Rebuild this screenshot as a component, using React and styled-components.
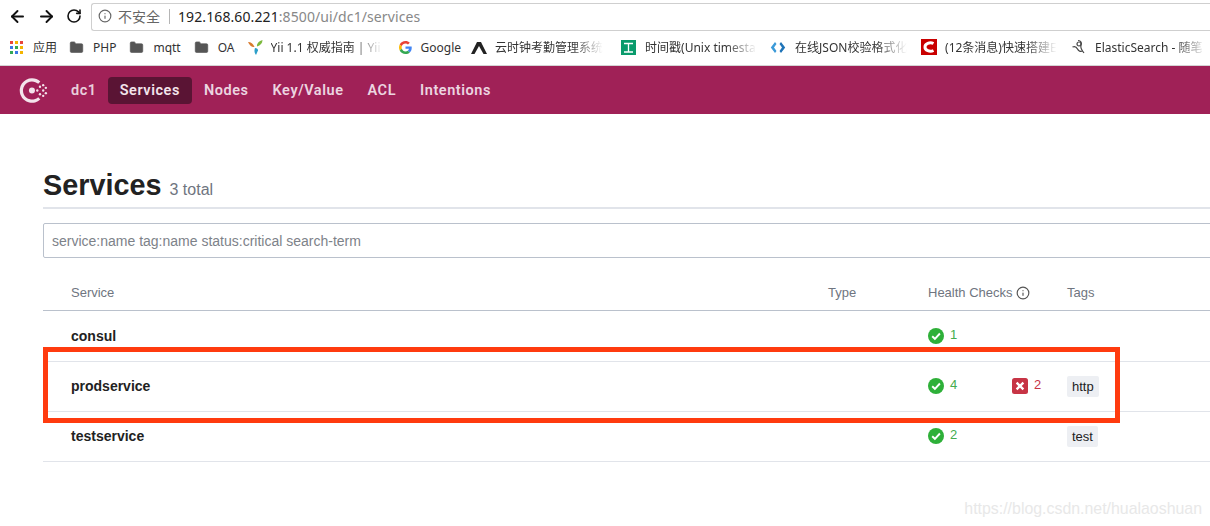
import React from "react";
import styled, { createGlobalStyle } from "styled-components";
import { ArrowLeft, ArrowRight, RotateCw, Info, Folder } from "lucide-react";

const Global = createGlobalStyle`
  html, body {
    margin: 0;
    padding: 0;
    height: 526px;
    overflow: hidden;
    background: #fff;
    font-family: "Liberation Sans", Arial, sans-serif;
  }
  * { box-sizing: border-box; }
`;

const CJK = `"Noto Sans", "Noto Sans CJK SC", sans-serif`;

const Page = styled.div`
  position: relative;
  width: 1210px;
  height: 526px;
  overflow: hidden;
`;

const Toolbar = styled.div`
  display: flex;
  align-items: center;
  height: 32px;
  padding: 0 0 0 8px;
  color: #111;
`;

const NavIcons = styled.div`
  display: flex;
  align-items: center;
  gap: 10px;
  width: 83px;
`;

const Omnibox = styled.div`
  display: flex;
  align-items: center;
  flex: 1;
  height: 28px;
  margin-top: 1px;
  padding: 0 0 1px 6px;
  border: 1px solid #cfcfcf;
  border-right: 0;
  border-radius: 3px 0 0 3px;
  font-family: ${CJK};
  font-size: 14px;
`;

const Insecure = styled.span`
  margin-left: 6px;
  padding-right: 9px;
  border-right: 1px solid #b5b5b5;
  line-height: 15px;
  font-size: 14px;
  color: #666;
`;

const Host = styled.span`
  margin-left: 8px;
  letter-spacing: 0.1px;
  color: #222;
`;

const UrlRest = styled.span`
  letter-spacing: 0.1px;
  color: #888;
`;

const Bookmarks = styled.div`
  display: flex;
  align-items: center;
  height: 34px;
  padding: 0 0 3px 10px;
  border-bottom: 1px solid #d4d4d4;
  font-family: ${CJK};
  font-size: 12px;
  color: #333;
  white-space: nowrap;
  overflow: hidden;
`;

const Mark = styled.div`
  display: flex;
  align-items: center;
  gap: ${(p) => p.$gap || 9}px;
  margin-right: ${(p) => p.$after || 13}px;
  flex: none;
`;

const MarkLabel = styled.span`
  display: block;
  width: ${(p) => p.$width}px;
  mask-image: linear-gradient(to right, #000 72%, transparent 100%);
`;

const TopNav = styled.nav`
  display: flex;
  align-items: center;
  height: 48px;
  padding-left: 17px;
  background: #a02157;
`;

const Logo = styled.svg`
  width: 31px;
  height: 31px;
  margin-right: 23px;
  flex: none;
`;

const DcName = styled.span`
  margin-right: 11px;
  font: 600 14.5px Roboto, sans-serif;
  letter-spacing: 0.55px;
  color: #e9cfdc;
`;

const NavLink = styled.a`
  height: 27px;
  padding: 0 12px;
  border-radius: 4px;
  font: 600 14.5px/27px Roboto, sans-serif;
  letter-spacing: 0.55px;
  color: ${(p) => (p.$active ? "#f3e4eb" : "#ecd5e0")};
  background: ${(p) => (p.$active ? "#5a1434" : "transparent")};
`;

const Main = styled.main`
  padding: 0 0 0 43px;
`;

const TitleBar = styled.div`
  display: flex;
  align-items: baseline;
  gap: 8px;
  height: 95px;
  padding-top: 54px;
  border-bottom: 2px solid #e1e4ea;
  width: 1190px;
`;

const Title = styled.h1`
  margin: 0;
  font-size: 28.8px;
  line-height: 34px;
  font-weight: 700;
  color: #222;
`;

const Count = styled.span`
  font-size: 16px;
  color: #6f7580;
`;

const Search = styled.div`
  width: 1190px;
  height: 35px;
  margin-top: 14px;
  padding-left: 8px;
  border: 1px solid #bac1cc;
  border-radius: 2px;
  font-size: 14px;
  line-height: 35px;
  color: #7d8289;
`;

const Table = styled.div`
  width: 1190px;
  margin-top: 18px;
`;

const Row = styled.div`
  display: grid;
  grid-template-columns: 757px 100px 139px 1fr;
  align-items: center;
  height: ${(p) => (p.$head ? 35 : 50)}px;
  margin-bottom: ${(p) => (p.$head ? 1 : 0)}px;
  padding-left: 28px;
  border-bottom: 1px solid ${(p) => (p.$head ? "#bac1cc" : "#e1e4ea")};
`;

const HeadCell = styled.div`
  display: flex;
  align-items: center;
  gap: 3px;
  padding-bottom: 1px;
  font-size: 13px;
  color: #6f7580;
`;

const Name = styled.div`
  padding-bottom: 1px;
  font-size: 14px;
  font-weight: 700;
  color: #222;
`;

const Health = styled.div`
  display: flex;
  align-items: center;
  margin-top: -1px;
`;

const Check = styled.span`
  display: flex;
  align-items: center;
  gap: 6px;
  width: ${(p) => (p.$wide ? "84px" : "auto")};
  font-size: 13px;
  color: ${(p) => (p.$bad ? "#c73445" : "#43ac4f")};
  span {
    position: relative;
    top: -2px;
  }
`;

const Tag = styled.span`
  display: inline-block;
  padding: 0 5px;
  height: 21px;
  border-radius: 2px;
  background: #edeff3;
  font-size: 13px;
  line-height: 21px;
  color: #222;
`;

const Highlight = styled.div`
  position: absolute;
  left: 43px;
  top: 347px;
  width: 1077px;
  height: 76px;
  border: 5px solid #ff3b0f;
  pointer-events: none;
`;

const Watermark = styled.div`
  position: absolute;
  right: 8px;
  bottom: 8px;
  font-size: 15.9px;
  color: #e8e8e8;
`;

const OkIcon = () => (
  <svg width="16" height="16" viewBox="0 0 16 16">
    <circle cx="8" cy="8" r="8" fill="#2eb039" />
    <path d="M4.2 8.200l2.700 2.600 5-5.300" fill="none" stroke="#fff" strokeWidth="1.900" />
  </svg>
);

const BadIcon = () => (
  <svg width="16" height="16" viewBox="0 0 16 16">
    <rect width="16" height="16" rx="2.5" fill="#c73445" />
    <path d="M4.600 4.600l6.800 6.800M11.400 4.600l-6.800 6.800" stroke="#fff" strokeWidth="2.300" />
  </svg>
);

const AppsIcon = () => (
  <svg width="13" height="13" viewBox="0 0 13 13">
    {["#e8453c", "#f4b400", "#e8453c", "#3b78e7", "#34a853", "#f4b400", "#34a853", "#3b78e7", "#f4b400"].map((c, i) => (
      <rect key={i} x={(i % 3) * 5} y={Math.floor(i / 3) * 5} width="3" height="3" fill={c} />
    ))}
  </svg>
);

const FolderIcon = () => <Folder size={15} fill="#555" color="#555" strokeWidth={1} />;

const YiiIcon = () => (
  <svg width="15" height="15" viewBox="0 0 15 15">
    <path d="M0 2c3 0 5 1.500 6.500 5C4 7.500 1.500 5.500 0 2z" fill="#d8792c" />
    <path d="M14.500 0c0 3-2 5.500-5.500 6.500C8.500 3.500 11 1 14.500 0z" fill="#7cb93e" />
    <path d="M7 8c2 0 3 1 3 2.500L8 15C6.500 13 6 10.500 7 8z" fill="#2c9fc9" />
  </svg>
);

const GoogleIcon = () => (
  <svg width="13" height="13" viewBox="0 0 48 48">
    <path fill="#ea4335" d="M24 9.500c3.500 0 6.700 1.300 9.100 3.500l6.800-6.800C35.800 2.400 30.200 0 24 0 14.600 0 6.500 5.400 2.600 13.200l7.900 6.200C12.400 13.700 17.700 9.500 24 9.500z" />
    <path fill="#4285f4" d="M47 24.500c0-1.600-.2-3.100-.4-4.500H24v9h13c-.6 3-2.200 5.500-4.800 7.200l7.700 6C44.400 37.900 47 31.800 47 24.500z" />
    <path fill="#fbbc05" d="M10.500 28.600c-.5-1.500-.8-3-.8-4.600s.3-3.100.8-4.600l-7.900-6.200C.9 16.500 0 20.100 0 24s.9 7.500 2.600 10.800l7.900-6.200z" />
    <path fill="#34a853" d="M24 48c6.500 0 11.900-2.100 15.900-5.800l-7.700-6c-2.200 1.400-4.900 2.300-8.200 2.300-6.300 0-11.600-4.200-13.500-9.900l-7.900 6.200C6.500 42.600 14.600 48 24 48z" />
  </svg>
);

const PeakIcon = () => (
  <svg width="16" height="13" viewBox="0 0 16 13">
    <path d="M0 13L6 1h4l6 12h-3.500L8 5l-4.500 8z" fill="#222" />
  </svg>
);

const StampIcon = () => (
  <svg width="15" height="15" viewBox="0 0 15 15">
    <rect width="15" height="15" fill="#0a9b6c" />
    <path d="M3 3.500h9M3 12h9M7.500 3.500V12" stroke="#fff" strokeWidth="1.300" />
  </svg>
);

const JsonIcon = () => (
  <svg width="16" height="13" viewBox="0 0 16 13">
    <path d="M5 1L.8 6.500 5 12l1.500-2L4 6.500 6.500 3z" fill="#3c9ad8" />
    <path d="M11 1l4.200 5.500L11 12l-1.500-2L12 6.500 9.500 3z" fill="#1f74b8" />
  </svg>
);

const CsdnIcon = () => (
  <svg width="16" height="16" viewBox="0 0 16 16">
    <rect width="16" height="16" fill="#c90000" />
    <path d="M12.500 4.500A5.500 4 0 0 0 4 8a5.500 4 0 0 0 8.500 3.500" fill="none" stroke="#fff" strokeWidth="3" />
  </svg>
);

const ElasticIcon = () => (
  <svg width="16" height="16" viewBox="0 0 16 16" fill="none" stroke="#444" strokeWidth="1.200">
    <path d="M7 1.500c3 0 4 2.500 3 5s1 5 3 7.500" />
    <path d="M1.500 8c2-1 4 0 5 2s3 3 5 2" />
    <circle cx="8" cy="5" r="2" />
  </svg>
);

const ConsulLogo = () => (
  <Logo viewBox="0 0 29 29" fill="#f3e4eb">
    <path d="M14 3a11.500 11.500 0 1 0 7.800 20l-1.900-2.300A8.500 8.500 0 1 1 14 6c2.300 0 4.300.8 5.900 2.300L21.800 6A11.500 11.500 0 0 0 14 3z" />
    <circle cx="14" cy="14.500" r="2.800" />
    {[[19, 14.500], [21.500, 11], [24.500, 9.500], [24.500, 14.500], [27, 12], [27, 17], [21.500, 18], [24.500, 19.500]].map(([x, y], i) => (
      <circle key={i} cx={x} cy={y} r="1.100" />
    ))}
  </Logo>
);

const services = [
  { name: "consul", ok: 1 },
  { name: "prodservice", ok: 4, bad: 2, tag: "http" },
  { name: "testservice", ok: 2, tag: "test" },
];

export default function App() {
  return (
    <Page>
      <Global />
      <Toolbar>
        <NavIcons>
          <ArrowLeft size={19} strokeWidth={2.4} />
          <ArrowRight size={19} strokeWidth={2.4} />
          <RotateCw size={16} strokeWidth={2.4} />
        </NavIcons>
        <Omnibox>
          <Info size={14} color="#666" />
          <Insecure>不安全</Insecure>
          <Host>192.168.60.221</Host>
          <UrlRest>:8500/ui/dc1/services</UrlRest>
        </Omnibox>
      </Toolbar>
      <Bookmarks>
        <Mark $gap={10} $after={12}><AppsIcon />应用</Mark>
        <Mark><FolderIcon />PHP</Mark>
        <Mark><FolderIcon />mqtt</Mark>
        <Mark><FolderIcon />OA</Mark>
        <Mark $gap={8} $after={16}><YiiIcon /><MarkLabel $width={112}>Yii 1.1 权威指南 | Yii F</MarkLabel></Mark>
        <Mark $after={10}><GoogleIcon />Google</Mark>
        <Mark $gap={8} $after={18}><PeakIcon /><MarkLabel $width={108}>云时钟考勤管理系统</MarkLabel></Mark>
        <Mark $after={13}><StampIcon /><MarkLabel $width={112}>时间戳(Unix timesta</MarkLabel></Mark>
        <Mark $after={14}><JsonIcon /><MarkLabel $width={112}>在线JSON校验格式化</MarkLabel></Mark>
        <Mark $gap={8} $after={14}><CsdnIcon /><MarkLabel $width={112}>(12条消息)快速搭建E</MarkLabel></Mark>
        <Mark $gap={8}><ElasticIcon /><MarkLabel $width={112}>ElasticSearch - 随笔</MarkLabel></Mark>
      </Bookmarks>
      <TopNav>
        <ConsulLogo />
        <DcName>dc1</DcName>
        <NavLink $active>Services</NavLink>
        <NavLink>Nodes</NavLink>
        <NavLink>Key/Value</NavLink>
        <NavLink>ACL</NavLink>
        <NavLink>Intentions</NavLink>
      </TopNav>
      <Main>
        <TitleBar>
          <Title>Services</Title>
          <Count>3 total</Count>
        </TitleBar>
        <Search>service:name tag:name status:critical search-term</Search>
        <Table>
          <Row $head>
            <HeadCell>Service</HeadCell>
            <HeadCell>Type</HeadCell>
            <HeadCell>
              Health Checks <Info size={14} color="#555" />
            </HeadCell>
            <HeadCell>Tags</HeadCell>
          </Row>
          {services.map((s) => (
            <Row key={s.name}>
              <Name>{s.name}</Name>
              <div />
              <Health>
                <Check $wide={!!s.bad}>
                  <OkIcon />
                  <span>{s.ok}</span>
                </Check>
                {s.bad && (
                  <Check $bad>
                    <BadIcon />
                    <span>{s.bad}</span>
                  </Check>
                )}
              </Health>
              <div>{s.tag && <Tag>{s.tag}</Tag>}</div>
            </Row>
          ))}
        </Table>
      </Main>
      <Highlight />
      <Watermark>https://blog.csdn.net/hualaoshuan</Watermark>
    </Page>
  );
}
